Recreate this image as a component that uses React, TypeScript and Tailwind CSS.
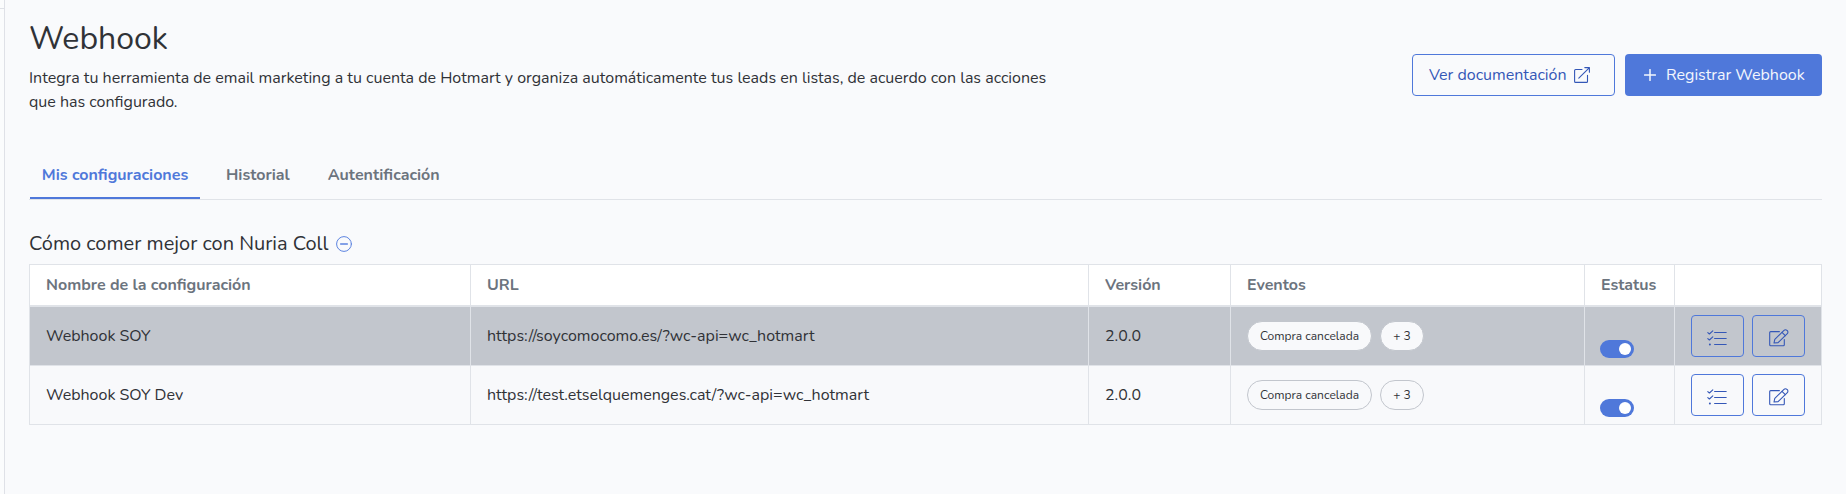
import React from 'react';

const columns = ['Nombre de la configuración', 'URL', 'Versión', 'Eventos', 'Estatus', ''];

const rows = [
  { name: 'Webhook SOY', url: 'https://soycomocomo.es/?wc-api=wc_hotmart', version: '2.0.0', hovered: true },
  { name: 'Webhook SOY Dev', url: 'https://test.etselquemenges.cat/?wc-api=wc_hotmart', version: '2.0.0', hovered: false },
];

const grid = 'grid grid-cols-[441px_618px_142px_354px_90px_147px]';
const cell = 'flex items-center border-r border-[#e0e3e8] px-4';

function ExternalIcon() {
  return (
    <svg width="16" height="16" viewBox="0 0 16 16" fill="none" stroke="currentColor" strokeWidth="1.1" strokeLinecap="round" strokeLinejoin="round">
      <path d="M8 2.5H1.6a1 1 0 0 0-1 1v10.9a1 1 0 0 0 1 1h10.9a1 1 0 0 0 1-1V8.3" />
      <path d="M10.8.6h4.6v4.6M15.2.8 4.8 11.2" />
    </svg>
  );
}

function PlusIcon() {
  return (
    <svg width="12" height="12" viewBox="0 0 12 12" fill="none" stroke="currentColor" strokeWidth="1.5" strokeLinecap="round">
      <path d="M6 .6v10.8M.6 6h10.8" />
    </svg>
  );
}

function MinusCircleIcon() {
  return (
    <svg width="16" height="16" viewBox="0 0 16 16" fill="none" stroke="currentColor" strokeWidth="1" strokeLinecap="round">
      <circle cx="8" cy="8" r="7.4" />
      <path d="M4.6 8h6.8" strokeWidth="1.3" />
    </svg>
  );
}

function ListCheckIcon() {
  return (
    <svg className="-ml-px" width="20" height="16" viewBox="0 0 20 16" fill="none" stroke="currentColor" strokeWidth="1.1" strokeLinecap="round" strokeLinejoin="round">
      <path d="M7.6 2.5h11.6M7.6 8.5h11.6M7.6 14.5h11.6" />
      <path d="M.8 2.6 2.4 4 5.8.8M.8 8.6 2.4 10l3.4-3.2" />
      <circle cx="2.9" cy="14.5" r="1" fill="currentColor" stroke="none" />
    </svg>
  );
}

function EditIcon() {
  return (
    <svg width="20" height="18" viewBox="0 0 20 18" fill="none" stroke="currentColor" strokeWidth="1.1" strokeLinecap="round" strokeLinejoin="round">
      <path d="M10.4 2.6H1.7a1 1 0 0 0-1 1v12.2a1 1 0 0 0 1 1h12.6a1 1 0 0 0 1-1v-5.3" />
      <path d="M5 14l.8-3.6L15 1.3a2.05 2.05 0 0 1 2.9 0l.4.4a2.05 2.05 0 0 1 0 2.9l-9.2 9L5 14z" />
      <path d="M13 3.3l3.3 3.3" />
    </svg>
  );
}

function Pill({ className, children }: { className: string; children: React.ReactNode }) {
  return (
    <span className={`flex h-[30px] shrink-0 items-center justify-center whitespace-nowrap rounded-full border border-[#c2c6cd] bg-[#f8f9fb] text-xs ${className}`}>
      {children}
    </span>
  );
}

function Toggle() {
  return (
    <button role="switch" aria-checked="true" className="-ml-px mt-[26px] flex h-[18px] w-[34px] shrink-0 items-center justify-end rounded-full bg-[#4f78da] pr-[3px]">
      <span className="size-3 rounded-full bg-white" />
    </button>
  );
}

function IconButton({ children }: { children: React.ReactNode }) {
  return (
    <button className="flex h-[42px] w-[53px] shrink-0 items-center justify-center rounded border border-[#4f78da] pt-[3px] text-[#3457b7]">
      {children}
    </button>
  );
}

export default function App() {
  return (
    <div className="flex h-[494px] w-full overflow-hidden bg-[#f9fafc] font-['Nunito','Nunito_Sans','Lato',sans-serif] text-base text-[#303237]">
      <aside className="w-[5px] shrink-0 border-r border-[#dfe1e7] bg-[#fbfcfd]">
        <div className="h-[9px] border-b border-[#dfe1e7]" />
      </aside>

      <main className="flex-1 px-6">
        <header className="flex justify-between">
          <div className="w-[1040px] pt-[19px]">
            <h1 className="text-[32px] leading-10">Webhook</h1>
            <p className="mt-[7px] leading-6">
              Integra tu herramienta de email marketing a tu cuenta de Hotmart y organiza automáticamente tus leads en
              listas, de acuerdo con las acciones
              <br />
              que has configurado.
            </p>
          </div>
          <div className="flex gap-2.5 pt-[54px]">
            <button className="flex h-[42px] w-[203px] items-center rounded border border-[#4f78da] pl-4 text-[#3457b7]">
              <span className="mr-[7px]">Ver documentación</span>
              <ExternalIcon />
            </button>
            <button className="flex h-[42px] w-[197px] items-center rounded bg-[#4f78da] pl-[19px] text-[#f3f6fd]">
              <PlusIcon />
              <span className="ml-2.5">Registrar Webhook</span>
            </button>
          </div>
        </header>

        <nav className="mt-[38px] flex h-[48px] border-b border-[#e0e3e8] pl-px font-bold text-[#6c747e]">
          <a className="flex h-[47px] w-[170px] items-center justify-center border-b-2 border-[#4f78da] text-[#4f78da]">Mis configuraciones</a>
          <a className="flex h-[47px] items-center pb-0.5 pl-[26px]">Historial</a>
          <a className="flex h-[47px] items-center pb-0.5 pl-[38px]">Autentificación</a>
        </nav>

        <section className="pt-[30px]">
          <h2 className="flex h-[34px] items-start text-xl leading-7">
            Cómo comer mejor con Nuria Coll
            <span className="ml-2 mt-1.5 text-[#5c83e0]">
              <MinusCircleIcon />
            </span>
          </h2>

          <div className="w-[1793px] border-l border-t border-[#e0e3e8]">
            <div className={`${grid} h-[42px] border-b-2 border-[#e0e3e8] bg-white font-bold text-[#6c747e]`}>
              {columns.map((title, i) => (
                <div key={i} className={cell}>{title}</div>
              ))}
            </div>
            {rows.map((row) => (
              <div key={row.name} className={`${grid} h-[59px] border-b border-[#e0e3e8] ${row.hovered ? 'bg-[#c2c6cd]' : 'bg-[#f8f9fb]'}`}>
                <div className={cell}>{row.name}</div>
                <div className={cell}>{row.url}</div>
                <div className={cell}>{row.version}</div>
                <div className={`${cell} gap-2`}>
                  <Pill className="w-[125px]">Compra cancelada</Pill>
                  <Pill className="w-11">+ 3</Pill>
                </div>
                <div className={cell}><Toggle /></div>
                <div className={`${cell} gap-2`}>
                  <IconButton><ListCheckIcon /></IconButton>
                  <IconButton><EditIcon /></IconButton>
                </div>
              </div>
            ))}
          </div>
        </section>
      </main>
    </div>
  );
}
